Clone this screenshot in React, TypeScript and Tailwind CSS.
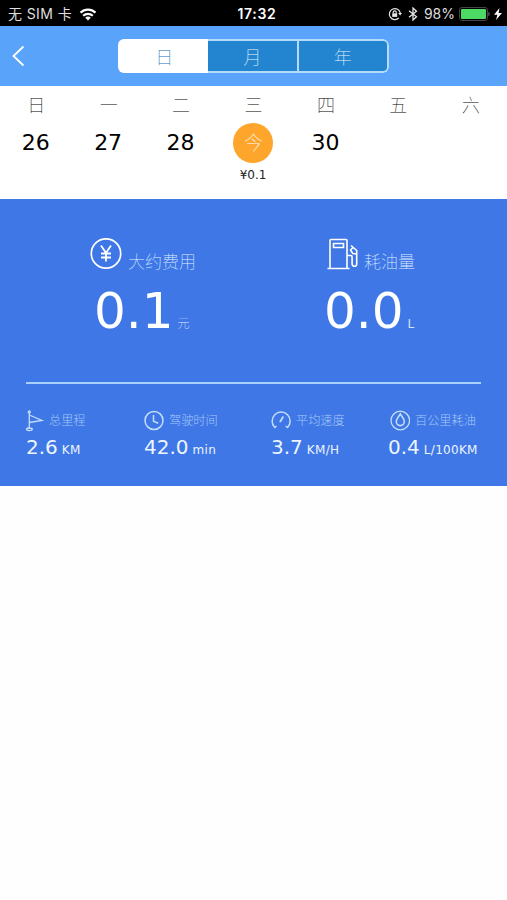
import type { ReactNode } from 'react';

interface Stat {
  label: string;
  value: string;
  unit: string;
  icon: ReactNode;
  column: string;
  labelGap: string;
}

const tabs = ['日', '月', '年'];

const days = [
  { weekday: '日', date: '26' },
  { weekday: '一', date: '27' },
  { weekday: '二', date: '28' },
  { weekday: '三', date: '今', today: true, cost: '¥0.1' },
  { weekday: '四', date: '30' },
  { weekday: '五', date: '' },
  { weekday: '六', date: '' },
];

const stats: Stat[] = [
  { label: '总里程', value: '2.6', unit: 'KM', icon: <FlagIcon />, column: 'w-[118px]', labelGap: 'ml-[3px]' },
  { label: '驾驶时间', value: '42.0', unit: 'min', icon: <ClockIcon />, column: 'w-[127px]', labelGap: 'ml-[5px]' },
  { label: '平均速度', value: '3.7', unit: 'KM/H', icon: <GaugeIcon />, column: 'w-[117px]', labelGap: 'ml-[5px]' },
  { label: '百公里耗油', value: '0.4', unit: 'L/100KM', icon: <DropIcon />, column: 'w-[100px]', labelGap: 'ml-[5px]' },
];

function FlagIcon() {
  return (
    <svg width="20" height="22" viewBox="0 0 20 22" fill="none" stroke="currentColor" strokeWidth="1.3">
      <circle cx="3.3" cy="2" r="1" />
      <path d="M3.3 3v16M3.3 5l12.700 5.500L3.300 12.500" />
      <ellipse cx="3.3" cy="19.300" rx="3" ry="1.300" />
    </svg>
  );
}

function ClockIcon() {
  return (
    <svg width="20" height="22" viewBox="0 0 20 22" fill="none" stroke="currentColor" strokeWidth="1.5">
      <circle cx="10" cy="10.500" r="9" />
      <path d="M9.500 5v6.200l4.700 2" />
    </svg>
  );
}

function GaugeIcon() {
  return (
    <svg width="20" height="22" viewBox="0 0 20 22" fill="none" stroke="currentColor" strokeWidth="1.5">
      <path d="M5.500 16l-1.700 1.500a9 9 0 1 1 12.700 0L14.800 16" />
      <path d="M9 12l3.300-5.500" strokeWidth="1.800" />
    </svg>
  );
}

function DropIcon() {
  return (
    <svg width="22" height="22" viewBox="0 0 22 22" fill="none" stroke="currentColor" strokeWidth="1.3">
      <circle cx="12.300" cy="10.500" r="9.300" />
      <path d="M12.300 4c-1.400 2.500-4 4.800-4 7.600a4 4 0 0 0 8 0c0-2.800-2.600-5.100-4-7.600z" strokeWidth="1.600" />
    </svg>
  );
}

function YenIcon() {
  return (
    <svg width="32" height="32" viewBox="0 0 32 32" fill="none" stroke="currentColor">
      <circle cx="16" cy="15.500" r="14.700" strokeWidth="1.700" />
      <path d="M11 7.500l5 7.500 5-7.500M16 15v8.500M11 15.500h10M11 19.500h10" strokeWidth="1.800" />
    </svg>
  );
}

function PumpIcon() {
  return (
    <svg width="32" height="32" viewBox="0 0 32 32" fill="none" stroke="currentColor" strokeWidth="1.600">
      <path d="M0.500 30.500h22M3 30V2.500a1 1 0 0 1 1-1h15a1 1 0 0 1 1 1V30" />
      <path d="M6.500 5.500h10v4h-10z" />
      <path d="M24 7.500l5.700 5V26a2.300 2.300 0 0 1-4.600 0v-7a1.500 1.500 0 0 0-1.500-1.500H20" />
      <path d="M26 9.500L23.500 12l2.300 3.500 3.900.5" />
    </svg>
  );
}

function StatusBar() {
  return (
    <div className="grid h-[26px] grid-cols-3 items-center bg-black pt-[2px] font-['Inter','Noto_Sans_CJK_SC',sans-serif] text-[14px] leading-none text-[#dedede]">
      <div className="flex items-center pl-[8px]">
        <span className="tracking-[0.400px] whitespace-pre">无 SIM 卡</span>
        <svg className="ml-[7px]" width="18" height="13" viewBox="0 0 17 13" fill="none" stroke="#fff" strokeWidth="2.200">
          <path d="M1 4.600a10.800 10.800 0 0 1 15 0M3.700 7.700a7 7 0 0 1 9.600 0" />
          <path d="M8.500 12.500L5.700 9.800a4.200 4.200 0 0 1 5.600 0z" fill="#fff" stroke="none" />
        </svg>
      </div>
      <div className="pl-[7px] text-center font-semibold tracking-[0.700px] text-white">17:32</div>
      <div className="flex items-center justify-end pr-[5px]">
        <svg width="14" height="14" viewBox="0 0 14 14" fill="none" stroke="#e5e5e5" strokeWidth="1.200">
          <path d="M10.800 11a5.500 5.500 0 1 1 1.500-4.800" />
          <path d="M10.200 6h3.800l-1.900 2.500z" fill="#e5e5e5" stroke="none" />
          <path d="M4.200 6.300h5v3.600h-5z" fill="#e5e5e5" stroke="none" />
          <path d="M5.200 6.500V5.300a1.500 1.500 0 0 1 3 0v1.200" />
        </svg>
        <svg className="ml-[6px]" width="10" height="14" viewBox="0 0 10 14" fill="none" stroke="#e5e5e5" strokeWidth="1.300">
          <path d="M1 3.800l7.500 6L5 13V1l3.500 3.200L1 10.200" />
        </svg>
        <span className="ml-[6px]">98%</span>
        <span className="ml-[4px] flex h-[14px] w-[29px] rounded-[3px] border-[1.500px] border-[#444] p-px">
          <span className="flex-1 rounded-[1px] bg-[#4cd964]" />
        </span>
        <span className="h-[4px] w-[2px] rounded-r bg-[#444]" />
        <svg className="ml-[4px]" width="8" height="12" viewBox="0 0 8 12" fill="#fff">
          <path d="M5.500 0L0 6.800h3.400L2 12l6-7H4.600z" />
        </svg>
      </div>
    </div>
  );
}

function Header() {
  return (
    <div className="flex h-[60px] items-center bg-[#5aa3fa] pl-[12px]">
      <svg width="14" height="22" viewBox="0 0 14 22" fill="none" stroke="#fff" strokeWidth="1.800">
        <path d="M11.500 1.500L1.500 11l10 9.500" />
      </svg>
      <div className="ml-[92px] grid h-[34px] w-[271px] grid-cols-3 overflow-hidden rounded-[6px] text-[18px] font-thin">
        {tabs.map((tab, index) => (
          <button
            key={tab}
            className={
              index === 0
                ? 'bg-white pt-[2px] pl-[2px] text-[#1272bd]'
                : 'border-y-2 border-r-2 border-[#b5dbfc] bg-[#2385cf] pt-[2px] text-[#e4f4ff] last:rounded-r-[6px]'
            }
          >
            {tab}
          </button>
        ))}
      </div>
    </div>
  );
}

function Week() {
  return (
    <div className="grid h-[113px] grid-cols-7 bg-white">
      {days.map((day) => (
        <div key={day.weekday} className="flex flex-col items-center pt-[8px]">
          <span className="text-[18px] leading-[24px] font-thin text-black">{day.weekday}</span>
          {day.today ? (
            <span className="mt-[5px] flex size-[40px] items-center justify-center rounded-full bg-[#fea62b] text-[19px] font-thin text-white">
              {day.date}
            </span>
          ) : (
            <span className="mt-[5px] h-[40px] pr-px text-[22px] leading-[39px] text-black">{day.date}</span>
          )}
          {day.cost && <span className="mt-[4px] pr-px text-[12px] leading-[16px] text-[#222]">{day.cost}</span>}
        </div>
      ))}
    </div>
  );
}

function Summary() {
  return (
    <div className="h-[287px] bg-[#3f77e6] text-white">
      <div className="flex h-[183px] pt-[39px]">
        <div className="w-[236px] pl-[90px]">
          <div className="flex h-[34px]">
            <YenIcon />
            <span className="ml-[6px] pt-[10px] text-[17px] leading-[28px] font-thin whitespace-nowrap text-[#deeeff]">大约费用</span>
          </div>
          <div className="mt-[9px] flex items-baseline pl-[4px] whitespace-nowrap">
            <span className="text-[50px] leading-[60px]">0.1</span>
            <span className="ml-[4px] text-[12px] font-thin text-[#e0eeff]">元</span>
          </div>
        </div>
        <div className="pl-[91px]">
          <div className="flex h-[34px]">
            <PumpIcon />
            <span className="ml-[5px] pt-[10px] text-[17px] leading-[28px] font-thin whitespace-nowrap text-[#deeeff]">耗油量</span>
          </div>
          <div className="mt-[9px] flex items-baseline whitespace-nowrap">
            <span className="-ml-[3px] text-[50px] leading-[60px]">0.0</span>
            <span className="ml-[4px] text-[12px] text-[#d0e6ff]">L</span>
          </div>
        </div>
      </div>
      <div className="mx-[26px] h-[2px] bg-[#a9d0fa]" />
      <div className="flex pt-[26px] pl-[26px]">
        {stats.map((stat) => (
          <div key={stat.label} className={stat.column}>
            <div className="flex h-[22px] items-center text-[#c3defc]">
              {stat.icon}
              <span className={`${stat.labelGap} pt-px text-[12.200px] font-light whitespace-nowrap text-[#a5c8f7]`}>{stat.label}</span>
            </div>
            <div className="flex items-baseline text-[#ecf5ff] whitespace-nowrap">
              <span className="text-[20px] leading-[30px]">{stat.value}</span>
              <span className="ml-[4px] text-[12px] tracking-[0.300px]">{stat.unit}</span>
            </div>
          </div>
        ))}
      </div>
    </div>
  );
}

export default function App() {
  return (
    <div className="h-[900px] w-[507px] overflow-hidden bg-[#fefefe] font-['DejaVu_Sans','Noto_Sans_CJK_SC',sans-serif]">
      <StatusBar />
      <Header />
      <Week />
      <Summary />
    </div>
  );
}
